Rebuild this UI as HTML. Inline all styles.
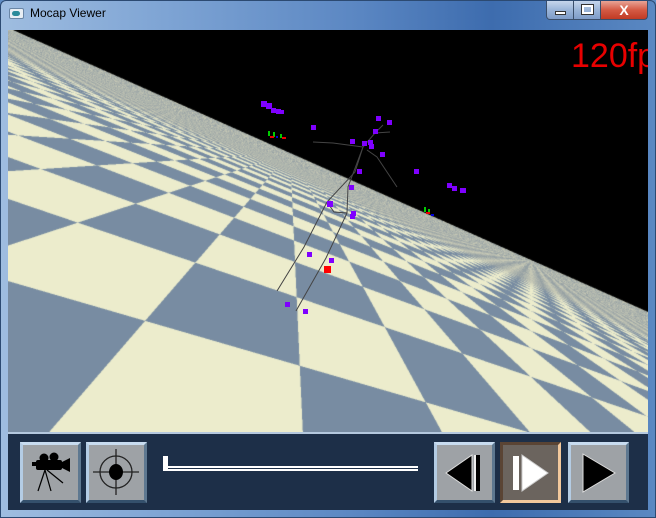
<!DOCTYPE html>
<html><head><meta charset="utf-8"><style>
*{margin:0;padding:0;box-sizing:border-box}
body{width:656px;height:518px;overflow:hidden;background:#5f8cc4;font-family:"Liberation Sans",sans-serif;position:relative}
#frame{position:absolute;left:0;top:0;width:656px;height:518px;border-radius:6px 6px 0 0;background:linear-gradient(to right,#9fbde0 0%,#7ea4d4 25%,#5a86c2 55%,#3d6cae 75%,#5a88c2 100%);border:1px solid #2c4a72}
#title{position:absolute;left:30px;top:6px;font-size:12px;color:#000}
#ico{position:absolute;left:9px;top:8px;width:15px;height:11px;background:#e8eef4;border:1px solid #6a86a6;border-radius:2px}
#ico:after{content:"";position:absolute;left:2px;top:2px;width:8px;height:5px;border-radius:3px;background:#2a8a9a}
.wb{position:absolute;top:1px;height:19px;border:1px solid #3a4e6a;border-top:none}
#min{left:546px;width:28px;background:linear-gradient(#c6d6ec,#9ab4d8 50%,#7e9cc8);border-radius:0 0 0 4px}
#max{left:573px;width:28px;background:linear-gradient(#c6d6ec,#9ab4d8 50%,#7e9cc8)}
#cls{left:600px;width:48px;background:linear-gradient(#e8a496,#d45a44 50%,#c03a24);border-radius:0 0 4px 0}
#view{position:absolute;left:8px;top:30px;width:640px;height:402px;background:#000;overflow:hidden}
canvas{position:absolute;left:0;top:0}
#fps{position:absolute;left:563px;top:7px;font-size:34px;color:#e80000;white-space:nowrap}
#bar{position:absolute;left:8px;top:432px;width:640px;height:78px;background:#1d2f48;border-top:2px solid #b4c8de}
.btn{position:absolute;top:8px;width:61px;height:61px;background:#9ea2a6;border-top:3px solid #c8dcf0;border-left:3px solid #b4cce4;border-right:3px solid #5e7890;border-bottom:3px solid #34506c}
.hl{background:#6b645e;border:3px solid #f2c89c;border-top-color:#5a4434;border-left-color:#5a4434}
svg.ic{position:absolute;left:0;top:0}
</style></head><body>
<div id="frame"></div>
<div id="ico"></div>
<div id="title">Mocap Viewer</div>
<div class="wb" id="min"><div style="position:absolute;left:8px;top:10px;width:11px;height:4px;background:#fff;border:1px solid #333"></div></div>
<div class="wb" id="max"><div style="position:absolute;left:8px;top:4px;width:11px;height:9px;border:2px solid #fff;outline:1px solid #333"></div></div>
<div class="wb" id="cls"><div style="position:absolute;left:0;top:0;width:46px;text-align:center;font-weight:bold;color:#fff;font-size:14px;line-height:18px">X</div></div>
<div id="view"><canvas id="cv" width="640" height="402"></canvas>
<svg width="640" height="402" style="position:absolute;left:0;top:0" viewBox="8 30 640 402">
<g stroke="#444" stroke-width="1" fill="none">
<polyline points="277,291 304,247 327,202 355,172 363,147"/>
<polyline points="296,311 326,258 347,213 348,187 363,147"/>
<polyline points="327,202 334,212 347,213"/>
<polyline points="363,147 333,143 313,142"/>
<polyline points="367,150 377,157 397,187"/>
<polyline points="363,147 375,133 383,125"/>
<polyline points="375,133 390,132"/>
</g>
<g fill="#7f00ff">
<rect x="261" y="101" width="6" height="6"/><rect x="266" y="103" width="6" height="6"/><rect x="271" y="108" width="5" height="5"/><rect x="276" y="109" width="5" height="5"/><rect x="280" y="110" width="4" height="4"/>
<rect x="311" y="125" width="5" height="5"/><rect x="376" y="116" width="5" height="5"/><rect x="387" y="120" width="5" height="5"/><rect x="373" y="129" width="5" height="5"/>
<rect x="350" y="139" width="5" height="5"/><rect x="362" y="141" width="5" height="5"/><rect x="368" y="140" width="5" height="5"/><rect x="369" y="144" width="5" height="5"/><rect x="380" y="152" width="5" height="5"/>
<rect x="414" y="169" width="5" height="5"/><rect x="357" y="169" width="5" height="5"/><rect x="349" y="185" width="5" height="5"/><rect x="327" y="201" width="6" height="6"/>
<rect x="351" y="211" width="5" height="5"/><rect x="350" y="214" width="5" height="5"/><rect x="307" y="252" width="5" height="5"/><rect x="329" y="258" width="5" height="5"/>
<rect x="285" y="302" width="5" height="5"/><rect x="303" y="309" width="5" height="5"/>
<rect x="447" y="183" width="5" height="5"/><rect x="452" y="186" width="5" height="5"/><rect x="460" y="188" width="6" height="5"/>
</g>
<rect x="324" y="266" width="7" height="7" fill="#f00"/>
<g>
<rect x="268" y="131" width="2" height="5" fill="#0c0"/><rect x="273" y="132" width="2" height="5" fill="#0c0"/><rect x="280" y="134" width="2" height="4" fill="#0c0"/><rect x="270" y="136" width="4" height="2" fill="#e00"/><rect x="282" y="137" width="4" height="2" fill="#e00"/><rect x="276" y="136" width="2" height="2" fill="#00d"/>
<rect x="424" y="207" width="2" height="5" fill="#0c0"/><rect x="428" y="209" width="2" height="5" fill="#0c0"/><rect x="426" y="212" width="4" height="2" fill="#e00"/><rect x="431" y="214" width="3" height="2" fill="#00d"/>
</g>
</svg>
<div id="fps">120fp</div>
</div>
<div id="bar">
<div class="btn" style="left:12px"><svg class="ic" width="55" height="55"><g fill="#000"><circle cx="21" cy="13" r="4.5"/><circle cx="31" cy="12" r="4.5"/><rect x="13" y="15" width="26" height="10" rx="2"/><path d="M39 17 L47 13 L47 27 L39 23Z"/><rect x="9" y="17" width="5" height="4"/></g><g stroke="#000" stroke-width="1.2"><line x1="22" y1="25" x2="15" y2="46"/><line x1="22" y1="25" x2="28" y2="46"/><line x1="24" y1="25" x2="40" y2="38"/></g></svg></div>
<div class="btn" style="left:78px"><svg class="ic" width="55" height="55"><g stroke="#222" stroke-width="1.3" fill="none"><circle cx="27" cy="27" r="16"/><line x1="4" y1="27" x2="50" y2="27"/><line x1="27" y1="4" x2="27" y2="50"/></g><ellipse cx="27" cy="27" rx="7" ry="8" fill="#000"/></svg></div>
<div style="position:absolute;left:155px;top:32px;width:255px;height:5px;border-top:2px solid #fff;border-bottom:2px solid #fff"></div>
<div style="position:absolute;left:155px;top:22px;width:5px;height:13px;background:#fff"></div>
<div class="btn" style="left:426px"><svg class="ic" width="55" height="55"><path d="M9 28 L35 10 L35 46Z" fill="#000" stroke="#ddd" stroke-width="1"/><rect x="37" y="10" width="6" height="36" fill="#000"/><rect x="37" y="10" width="2" height="36" fill="#eee"/></svg></div>
<div class="btn hl" style="left:492px"><svg class="ic" width="55" height="55"><rect x="10" y="11" width="6" height="34" fill="#fff"/><path d="M19 10 L45 28 L19 46Z" fill="#fff" stroke="#ccc"/></svg></div>
<div class="btn" style="left:560px"><svg class="ic" width="55" height="55"><path d="M12 9 L44 28 L12 47Z" fill="#000" stroke="#ddd" stroke-width="1"/></svg></div>
</div>
<script>
(function(){
var c=document.getElementById('cv'),ctx=c.getContext('2d');
var W=640,H=402,img=ctx.createImageData(W,H),d=img.data;
var th=Math.atan(0.444),ct=Math.cos(th),st=Math.sin(th);
var f=302,ph=Math.atan(55/f),cp=Math.cos(ph),sp=Math.sin(ph);
var Ax=-0.2100,Az=0.9777,Bx=0.9777,Bz=0.2100,s=0.798,oa=0.258,ob=0.4254;
var CR=[236,236,204],BL=[120,140,162],AV=[172,176,166];
function samp(px,py,out){
 var u=px-328,v=py-230;
 var u1=ct*u+st*v,v1=-st*u+ct*v;
 var yD=v1*cp+f*sp;
 if(yD<=0.02){out[0]=0;out[1]=0;out[2]=0;return;}
 var zc=-v1*sp+f*cp,t=1/yD,X=u1*t,Z=zc*t;
 var a=X*Ax+Z*Az,b=X*Bx+Z*Bz;
 var fa=Math.floor(a/s+oa),fb=Math.floor(b/s+ob);
 var col=((fa+fb)&1)?CR:BL;
 var fp=(Math.sqrt(X*X+Z*Z)/yD)*1.2/s;
 var w=Math.min(0.6,Math.max(0,(fp-0.8)/1.2));
 out[0]=col[0]*(1-w)+AV[0]*w;out[1]=col[1]*(1-w)+AV[1]*w;out[2]=col[2]*(1-w)+AV[2]*w;
}
var o=[0,0,0];
for(var y=0;y<H;y++)for(var x=0;x<W;x++){
 var r=0,g=0,bb=0;
 for(var sy=0;sy<2;sy++)for(var sx=0;sx<2;sx++){samp(x+8+0.25+sx*0.5,y+30+0.25+sy*0.5,o);r+=o[0];g+=o[1];bb+=o[2];}
 var i=(y*W+x)*4;d[i]=r/4;d[i+1]=g/4;d[i+2]=bb/4;d[i+3]=255;
}
ctx.putImageData(img,0,0);
})();
</script>
</body></html>
